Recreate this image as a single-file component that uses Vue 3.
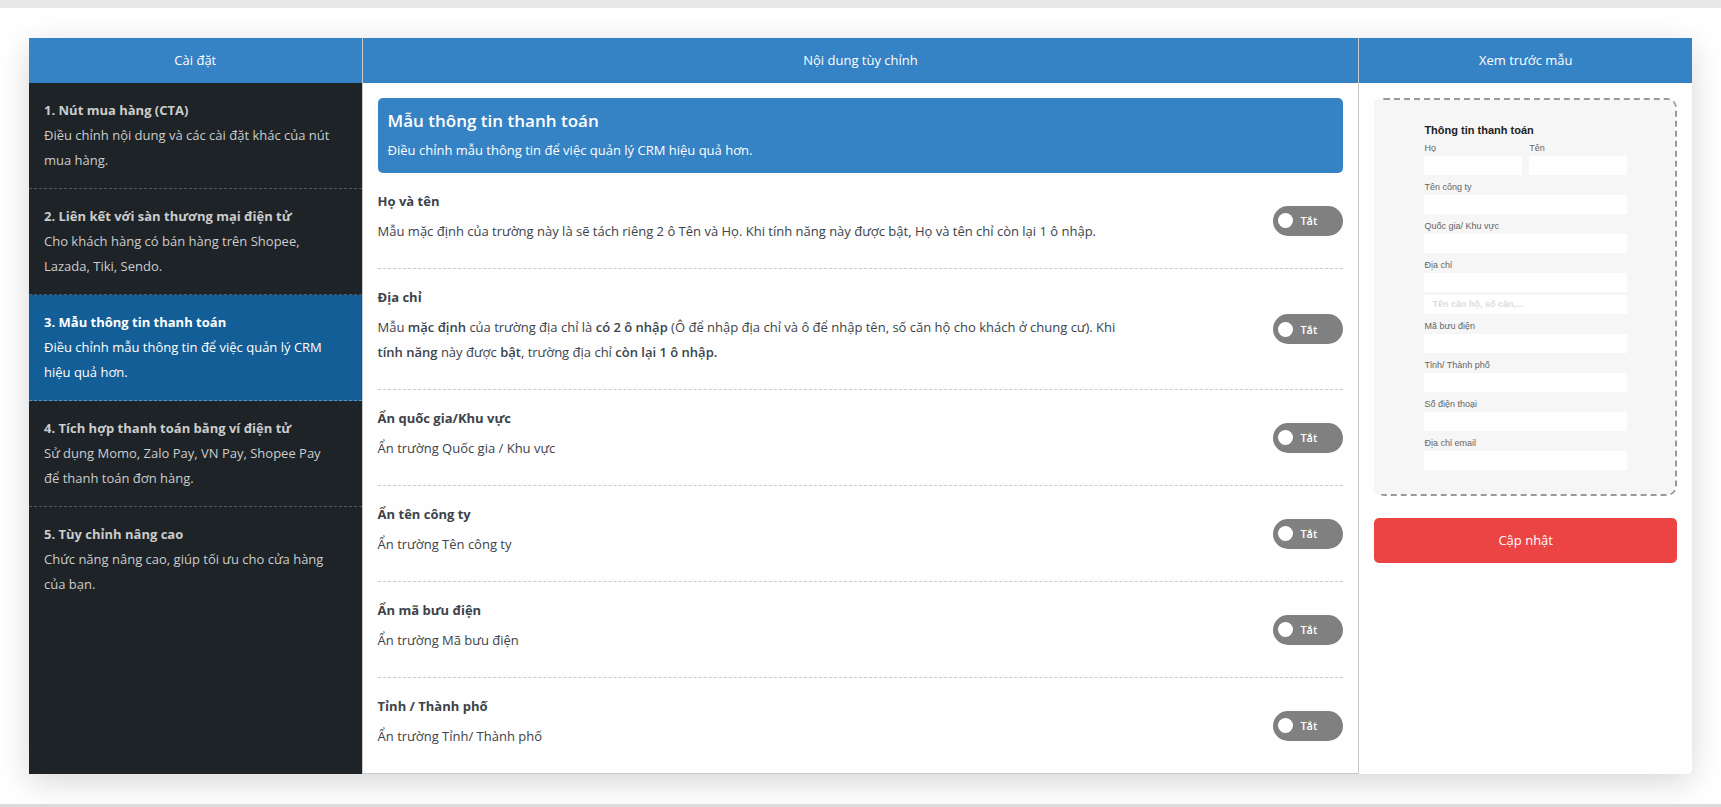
<script setup>
import { ref } from 'vue'

const steps = [
  { title: '1. Nút mua hàng (CTA)', text: 'Điều chỉnh nội dung và các cài đặt khác của nút mua hàng.' },
  { title: '2. Liên kết với sàn thương mại điện tử', text: 'Cho khách hàng có bán hàng trên Shopee, Lazada, Tiki, Sendo.' },
  { title: '3. Mẫu thông tin thanh toán', text: 'Điều chỉnh mẫu thông tin để việc quản lý CRM hiệu quả hơn.' },
  { title: '4. Tích hợp thanh toán bằng ví điện tử', text: 'Sử dụng Momo, Zalo Pay, VN Pay, Shopee Pay để thanh toán đơn hàng.' },
  { title: '5. Tùy chỉnh nâng cao', text: 'Chức năng nâng cao, giúp tối ưu cho cửa hàng của bạn.' },
]
const active = ref(2)

const options = ref([
  { title: 'Họ và tên', on: false, parts: [{ t: 'Mẫu mặc định của trường này là sẽ tách riêng 2 ô Tên và Họ. Khi tính năng này được bật, Họ và tên chỉ còn lại 1 ô nhập.' }] },
  {
    title: 'Địa chỉ',
    on: false,
    parts: [
      { t: 'Mẫu ' }, { t: 'mặc định', b: true }, { t: ' của trường địa chỉ là ' }, { t: 'có 2 ô nhập', b: true },
      { t: ' (Ô để nhập địa chỉ và ô để nhập tên, số căn hộ cho khách ở chung cư). Khi ' },
      { t: 'tính năng', b: true }, { t: ' này được ' }, { t: 'bật', b: true }, { t: ', trường địa chỉ ' }, { t: 'còn lại 1 ô nhập.', b: true },
    ],
  },
  { title: 'Ẩn quốc gia/Khu vực', on: false, parts: [{ t: 'Ẩn trường Quốc gia / Khu vực' }] },
  { title: 'Ẩn tên công ty', on: false, parts: [{ t: 'Ẩn trường Tên công ty' }] },
  { title: 'Ẩn mã bưu điện', on: false, parts: [{ t: 'Ẩn trường Mã bưu điện' }] },
  { title: 'Tỉnh / Thành phố', on: false, parts: [{ t: 'Ẩn trường Tỉnh/ Thành phố' }] },
])

const fields = [
  { id: 'last', label: 'Họ', half: true },
  { id: 'first', label: 'Tên', half: true },
  { id: 'company', label: 'Tên công ty' },
  { id: 'country', label: 'Quốc gia/ Khu vực' },
  { id: 'address', label: 'Địa chỉ', extra: 'Tên căn hộ, số căn,...' },
  { id: 'postcode', label: 'Mã bưu điện' },
  { id: 'city', label: 'Tỉnh/ Thành phố' },
  { id: 'phone', label: 'Số điện thoại' },
  { id: 'email', label: 'Địa chỉ email' },
]
</script>

<template>
  <main class="page">
    <div class="panel">
      <section class="column">
        <h2 class="head">Cài đặt</h2>
        <nav class="steps">
          <button
            v-for="(step, i) in steps"
            :key="step.title"
            type="button"
            class="step"
            :class="{ active: i === active }"
            @click="active = i"
          >
            <strong class="step-title">{{ step.title }}</strong>
            <span class="step-text">{{ step.text }}</span>
          </button>
        </nav>
      </section>

      <section class="column middle">
        <h2 class="head">Nội dung tùy chỉnh</h2>
        <div class="content">
          <header class="banner">
            <h3 class="banner-title">Mẫu thông tin thanh toán</h3>
            <p class="banner-text">Điều chỉnh mẫu thông tin để việc quản lý CRM hiệu quả hơn.</p>
          </header>
          <div v-for="(option, i) in options" :key="option.title" class="option">
            <div class="option-body">
              <h4 :id="`option-${i}`" class="option-title">{{ option.title }}</h4>
              <p class="option-text"><template v-for="(part, k) in option.parts" :key="k"><strong v-if="part.b" class="bold">{{ part.t }}</strong><template v-else>{{ part.t }}</template></template></p>
            </div>
            <label class="toggle" :class="{ on: option.on }">
              <input v-model="option.on" type="checkbox" class="toggle-input" :aria-labelledby="`option-${i}`" />
              <span class="knob"></span>
              <span>{{ option.on ? 'Bật' : 'Tắt' }}</span>
            </label>
          </div>
        </div>
      </section>

      <section class="column">
        <h2 class="head">Xem trước mẫu</h2>
        <div class="side">
          <div class="preview">
            <form class="form" @submit.prevent>
              <h3 class="form-title">Thông tin thanh toán</h3>
              <div v-for="field in fields" :key="field.id" class="field" :class="{ half: field.half }">
                <label :for="field.id" class="field-label">{{ field.label }}</label>
                <input :id="field.id" type="text" class="field-input" />
                <input v-if="field.extra" type="text" class="field-input extra" :placeholder="field.extra" :aria-label="field.extra" />
              </div>
            </form>
          </div>
          <button type="button" class="update">Cập nhật</button>
        </div>
      </section>
    </div>
  </main>
</template>

<style>
body {
  background: #dcdcdd;
}
</style>

<style scoped>
.page {
  padding: 30px 29px;
  border-top: 8px solid #e8e8e8;
  background: #fff;
  overflow: hidden;
  font-family: "Open Sans", "Noto Sans", sans-serif;
  font-size: 13px;
  line-height: 25px;
  color: #3c434a;
}
.page * {
  box-sizing: border-box;
}
h2, h3, h4, p {
  margin: 0;
}
button, input {
  font: inherit;
  border: 0;
}
.panel {
  display: grid;
  grid-template-columns: 1fr 3fr 1fr;
  border-radius: 5px;
  background: #fefefe;
  box-shadow: 0 8px 32px rgba(0, 0, 0, 0.16);
}
.column {
  display: flex;
  flex-direction: column;
  min-width: 0;
}
.middle {
  border: solid #c8cacb;
  border-width: 0 1px 1px;
}
.head {
  padding: 10px;
  background: #3582c4;
  color: #fff;
  font-size: 13px;
  font-weight: 400;
  text-align: center;
}
.steps {
  flex: 1;
  background: #1d2327;
}
.step {
  display: block;
  width: 100%;
  padding: 15px 24px 15px 15px;
  border-bottom: 1px dashed #50575e;
  background: none;
  color: #ccc;
  text-align: left;
  cursor: pointer;
}
.step:last-child {
  border-bottom: 0;
}
.step.active {
  border-bottom-color: #4f94c4;
  background: #135e96;
  color: #fff;
}
.step-title, .step-text {
  display: block;
}
.step-title {
  font-weight: 700;
}
.content {
  padding: 15px 15px 0;
}
.banner {
  padding: 10px;
  border-radius: 5px;
  background: #3582c4;
  color: #fff;
}
.banner-title {
  margin-bottom: 5px;
  font-size: 17px;
  font-weight: 600;
}
.option {
  display: flex;
  align-items: center;
  justify-content: space-between;
  border-bottom: 1px dashed #c8cacb;
}
.option:last-child {
  border-bottom: 0;
}
.option-body {
  width: 80%;
  padding: 16px 24px 24px 0;
}
.option-title {
  margin-bottom: 5px;
  font-size: 13px;
  font-weight: 700;
}
.bold {
  font-weight: 600;
}
.toggle {
  position: relative;
  display: flex;
  align-items: center;
  gap: 7px;
  width: 70px;
  height: 30px;
  padding: 0 5px;
  border-radius: 15px;
  background: #808080;
  color: #fff;
  font-size: 11px;
  font-weight: 600;
  cursor: pointer;
}
.toggle.on {
  flex-direction: row-reverse;
  background: #3582c4;
}
.toggle-input {
  position: absolute;
  inset: 0;
  margin: 0;
  opacity: 0;
}
.knob {
  width: 15px;
  height: 15px;
  border-radius: 50%;
  background: #fff;
}
.side {
  padding: 15px;
}
.preview {
  margin-bottom: 22px;
  border: 2px dashed #999;
  border-left: 0;
  border-radius: 10px;
}
.form {
  display: grid;
  grid-template-columns: 1fr 1fr;
  column-gap: 7px;
  padding: 24px 48px 24px 50px;
  border-radius: 0 8px 8px 0;
  background: #f6f6f6;
  color: #646464;
  font-family: "Liberation Sans", Arial, sans-serif;
  font-size: 9px;
}
.form-title {
  grid-column: 1 / -1;
  color: #222;
  font-size: 11px;
  line-height: 12px;
}
.field {
  grid-column: 1 / -1;
  min-width: 0;
}
.field.half {
  grid-column: auto;
}
.field-label {
  display: block;
  padding-top: 4px;
  line-height: 16px;
}
.field-input {
  display: block;
  width: 100%;
  height: 19px;
  padding: 0 8px;
  background: #fff;
}
.extra {
  margin-top: 3px;
}
.extra::placeholder {
  color: #dcdcdc;
  font-weight: 700;
}
.update {
  width: 100%;
  padding: 10px;
  border-radius: 5px;
  background: #ec4444;
  color: #fff;
  cursor: pointer;
}
</style>
